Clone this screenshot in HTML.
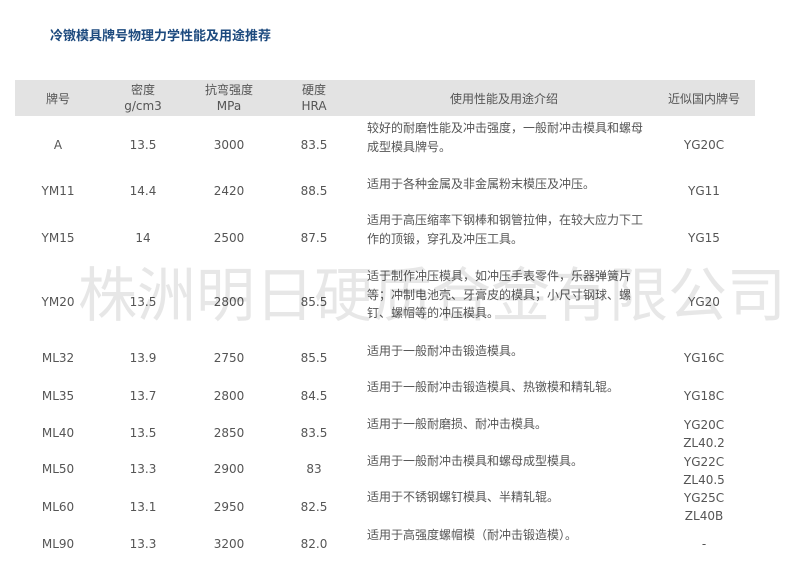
<!DOCTYPE html>
<html><head><meta charset="utf-8"><style>
body{margin:0;width:803px;height:573px;background:#fff;position:relative;overflow:hidden;font-family:"DejaVu Sans","Noto Sans CJK SC",sans-serif;font-size:12px;color:#555;}
.a{position:absolute;line-height:16px;white-space:nowrap}
.c1{left:15px;width:86px;text-align:center}
.c2{left:103px;width:80px;text-align:center}
.c3{left:189px;width:80px;text-align:center}
.c4{left:274px;width:80px;text-align:center}
.c6{left:654px;width:100px;text-align:center}
.d{left:367px;line-height:18.5px;font-family:"Noto Sans CJK SC",sans-serif}
.hd{position:absolute;left:15px;top:80px;width:740px;height:36px;background:#e3e3e3}
.wm{position:absolute;left:78px;top:258px;font-size:59px;line-height:66px;color:#000;opacity:.09;white-space:nowrap;font-family:"Noto Sans CJK SC",sans-serif}
</style></head><body>
<div class="a" style="left:50px;top:27px;font-size:13px;font-weight:bold;color:#1d4a7e;font-family:'Noto Sans CJK SC',sans-serif">冷镦模具牌号物理力学性能及用途推荐</div>
<div class="hd"></div>
<div class="a c1" style="top:91px">牌号</div>
<div class="a c2" style="top:82px">密度<br>g/cm3</div>
<div class="a c3" style="top:82px">抗弯强度<br>MPa</div>
<div class="a c4" style="top:82px">硬度<br>HRA</div>
<div class="a" style="left:450px;top:91px">使用性能及用途介绍</div>
<div class="a c6" style="top:91px">近似国内牌号</div>

<div class="a c1" style="top:137px">A</div><div class="a c2" style="top:137px">13.5</div><div class="a c3" style="top:137px">3000</div><div class="a c4" style="top:137px">83.5</div>
<div class="a d" style="top:119px">较好的耐磨性能及冲击强度，一般耐冲击模具和螺母<br>成型模具牌号。</div><div class="a c6" style="top:137px">YG20C</div>

<div class="a c1" style="top:183px">YM11</div><div class="a c2" style="top:183px">14.4</div><div class="a c3" style="top:183px">2420</div><div class="a c4" style="top:183px">88.5</div>
<div class="a d" style="top:175px">适用于各种金属及非金属粉末模压及冲压。</div><div class="a c6" style="top:183px">YG11</div>

<div class="a c1" style="top:230px">YM15</div><div class="a c2" style="top:230px">14</div><div class="a c3" style="top:230px">2500</div><div class="a c4" style="top:230px">87.5</div>
<div class="a d" style="top:211px">适用于高压缩率下钢棒和钢管拉伸，在较大应力下工<br>作的顶锻，穿孔及冲压工具。</div><div class="a c6" style="top:230px">YG15</div>

<div class="a c1" style="top:294px">YM20</div><div class="a c2" style="top:294px">13.5</div><div class="a c3" style="top:294px">2800</div><div class="a c4" style="top:294px">85.5</div>
<div class="a d" style="top:267px">适于制作冲压模具，如冲压手表零件，乐器弹簧片<br>等；冲制电池壳、牙膏皮的模具；小尺寸钢球、螺<br>钉、螺帽等的冲压模具。</div><div class="a c6" style="top:294px">YG20</div>

<div class="a c1" style="top:350px">ML32</div><div class="a c2" style="top:350px">13.9</div><div class="a c3" style="top:350px">2750</div><div class="a c4" style="top:350px">85.5</div>
<div class="a d" style="top:342px">适用于一般耐冲击锻造模具。</div><div class="a c6" style="top:350px">YG16C</div>

<div class="a c1" style="top:388px">ML35</div><div class="a c2" style="top:388px">13.7</div><div class="a c3" style="top:388px">2800</div><div class="a c4" style="top:388px">84.5</div>
<div class="a d" style="top:378px">适用于一般耐冲击锻造模具、热镦模和精轧辊。</div><div class="a c6" style="top:388px">YG18C</div>

<div class="a c1" style="top:425px">ML40</div><div class="a c2" style="top:425px">13.5</div><div class="a c3" style="top:425px">2850</div><div class="a c4" style="top:425px">83.5</div>
<div class="a d" style="top:415px">适用于一般耐磨损、耐冲击模具。</div><div class="a c6" style="top:416px;line-height:18px">YG20C<br>ZL40.2</div>

<div class="a c1" style="top:461px">ML50</div><div class="a c2" style="top:461px">13.3</div><div class="a c3" style="top:461px">2900</div><div class="a c4" style="top:461px">83</div>
<div class="a d" style="top:452px">适用于一般耐冲击模具和螺母成型模具。</div><div class="a c6" style="top:453px;line-height:18px">YG22C<br>ZL40.5</div>

<div class="a c1" style="top:499px">ML60</div><div class="a c2" style="top:499px">13.1</div><div class="a c3" style="top:499px">2950</div><div class="a c4" style="top:499px">82.5</div>
<div class="a d" style="top:488px">适用于不锈钢螺钉模具、半精轧辊。</div><div class="a c6" style="top:489px;line-height:18px">YG25C<br>ZL40B</div>

<div class="a c1" style="top:536px">ML90</div><div class="a c2" style="top:536px">13.3</div><div class="a c3" style="top:536px">3200</div><div class="a c4" style="top:536px">82.0</div>
<div class="a d" style="top:526px">适用于高强度螺帽模（耐冲击锻造模）。</div><div class="a c6" style="top:536px">-</div>

<div class="wm">株洲明日硬质合金有限公司</div>
</body></html>
